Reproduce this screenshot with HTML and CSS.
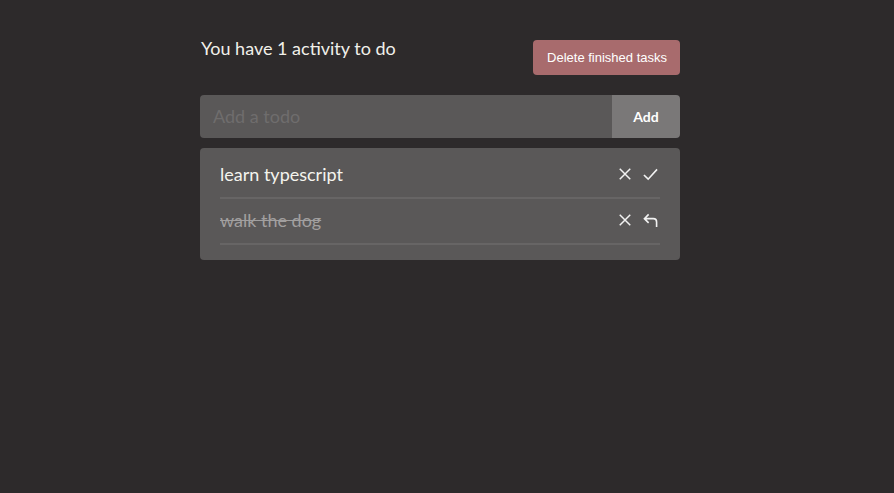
FILE: index.html
```html
<!DOCTYPE html>
<html>
<head>
<meta charset="utf-8">
<link rel="stylesheet" href="styles.css">
</head>
<body>
<main class="app">
  <header class="top">
    <h1 class="title">You have 1 activity to do</h1>
    <button class="danger">Delete finished tasks</button>
  </header>
  <form class="add-row">
    <input class="add-input" type="text" placeholder="Add a todo">
    <button class="add-btn" type="button">Add</button>
  </form>
  <section class="list">
    <div class="item">
      <span class="text">learn typescript</span>
      <span class="actions">
        <svg class="icon" viewBox="0 0 16 16"><path d="M2 2 L14 14 M14 2 L2 14"/></svg>
        <svg class="icon" viewBox="0 0 16 16"><path d="M1 8.5 L5.5 13 L15 2.5"/></svg>
      </span>
    </div>
    <div class="item done">
      <span class="text">walk the dog</span>
      <span class="actions">
        <svg class="icon" viewBox="0 0 16 16"><path d="M2 2 L14 14 M14 2 L2 14"/></svg>
        <svg class="icon" viewBox="0 0 16 16"><path d="M6 1.5 L1.5 6 L6 10.5 M1.5 6 H11 Q14.5 6 14.5 9.5 V15"/></svg>
      </span>
    </div>
  </section>
</main>
</body>
</html>
```
FILE: styles.css
```css
* { box-sizing: border-box; }
html, body { margin: 0; padding: 0; }
body {
  background: #2d2a2b;
  font-family: Lato, "Noto Sans", sans-serif;
  color: #f4f4ee;
  padding-right: 14px;
}
.app {
  width: 480px;
  margin: 0 auto;
  padding-top: 36px;
}
.top {
  display: flex;
  justify-content: space-between;
  align-items: flex-start;
}
.title {
  margin: 0 0 0 1px;
  font-weight: 400;
  font-size: 18px;
  line-height: 24px;
  color: #f1f0ea;
}
.danger {
  margin-top: 4px;
  height: 35px;
  padding: 0 13px 0 14px;
  border: none;
  border-radius: 4px;
  background: #a86b6d;
  color: #fff;
  font-family: Arial, "Liberation Sans", sans-serif;
  font-size: 13px;
}
.add-row {
  margin: 20px 0 0;
  display: flex;
  height: 43px;
  border-radius: 4px;
  overflow: hidden;
}
.add-input {
  flex: 1;
  border: none;
  background: #5a5858;
  padding: 0 13px 2px;
  font-family: Lato, "Noto Sans", sans-serif;
  font-size: 18px;
  color: #eee;
  outline: none;
}
.add-input::placeholder { color: #6f6d6d; }
.add-btn {
  width: 68px;
  border: none;
  background: #7a7878;
  color: #fff;
  font-family: Lato, sans-serif;
  font-weight: 700;
  font-size: 14px;
}
.list {
  margin-top: 10px;
  background: #5a5858;
  border-radius: 4px;
  padding: 5px 20px 15px;
}
.item {
  display: flex;
  justify-content: space-between;
  align-items: center;
  height: 46px;
  padding-bottom: 3px;
  border-bottom: 2px solid #676565;
}
.text {
  font-size: 18px;
  color: #f4f4ee;
}
.done .text {
  color: #a19f9f;
  text-decoration: line-through;
}
.actions {
  display: flex;
  gap: 11px;
  padding-right: 2px;
  padding-top: 1px;
}
.icon {
  width: 14px;
  height: 14px;
  fill: none;
  stroke: #f2f2f2;
  stroke-width: 1.7;
}
.actions .icon + .icon {
  width: 15px;
  height: 15px;
}
```
